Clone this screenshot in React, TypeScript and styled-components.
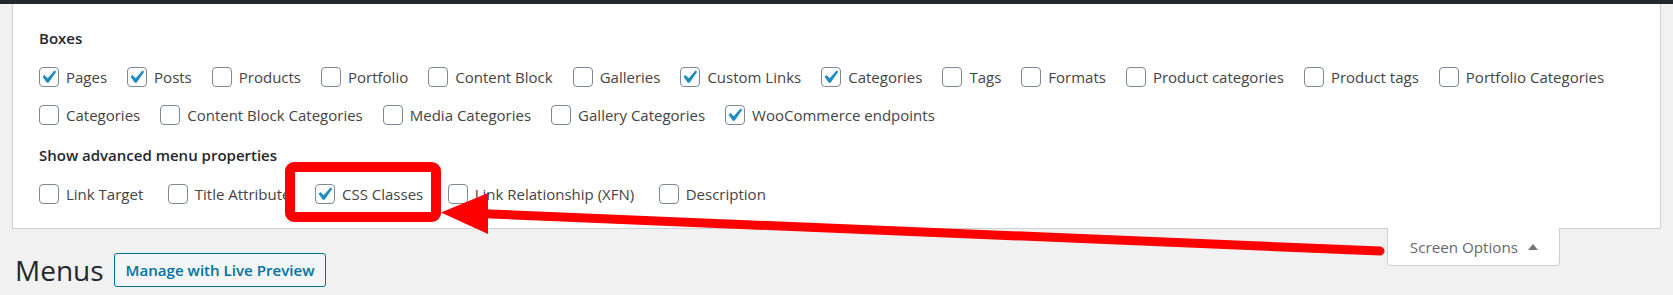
import * as React from 'react';
import styled, { createGlobalStyle } from 'styled-components';

const fontStack = `"Open Sans", "Noto Sans", "DejaVu Sans", sans-serif`;

const GlobalStyle = createGlobalStyle`
  html, body {
    margin: 0;
    padding: 0;
    background: #f1f1f1;
  }
  body {
    font-family: ${fontStack};
    color: #444;
    -webkit-font-smoothing: antialiased;
  }
  * {
    box-sizing: border-box;
  }
`;

interface BoxOption {
  label: string;
  checked?: boolean;
}

const boxes: BoxOption[] = [
  { label: 'Pages', checked: true },
  { label: 'Posts', checked: true },
  { label: 'Products' },
  { label: 'Portfolio' },
  { label: 'Content Block' },
  { label: 'Galleries' },
  { label: 'Custom Links', checked: true },
  { label: 'Categories', checked: true },
  { label: 'Tags' },
  { label: 'Formats' },
  { label: 'Product categories' },
  { label: 'Product tags' },
  { label: 'Portfolio Categories' },
  { label: 'Categories' },
  { label: 'Content Block Categories' },
  { label: 'Media Categories' },
  { label: 'Gallery Categories' },
  { label: 'WooCommerce endpoints', checked: true },
];

const advanced: BoxOption[] = [
  { label: 'Link Target' },
  { label: 'Title Attribute' },
  { label: 'CSS Classes', checked: true },
  { label: 'Link Relationship (XFN)' },
  { label: 'Description' },
];

const Page = styled.div`
  position: relative;
  min-height: 295px;
`;

const AdminBarEdge = styled.div`
  height: 4px;
  background: #23282d;
`;

const ScreenMeta = styled.div`
  margin: 0 12px;
  padding: 23px 10px 23px 26px;
  background: #fff;
  border: 1px solid #ccd0d4;
  border-top: 0;
`;

const Group = styled.div`
  & + & {
    margin-top: 18px;
  }
`;

const GroupTitle = styled.div`
  font-size: 15px;
  line-height: 22px;
  font-weight: 600;
  color: #23282d;
  margin-bottom: 17px;
`;

const CheckList = styled.div<{ $gap: number }>`
  display: flex;
  flex-wrap: wrap;
  column-gap: ${p => p.$gap}px;
  row-gap: 15.5px;
`;

const Option = styled.label`
  display: inline-flex;
  align-items: center;
  gap: 7px;
  font-size: 15px;
  line-height: 22px;
  color: #444;
  white-space: nowrap;
`;

const Box = styled.span`
  position: relative;
  flex: none;
  width: 20px;
  height: 20px;
  border: 1px solid #7e8993;
  border-radius: 4px;
  background: #fff;
`;

const Tick = styled.svg`
  position: absolute;
  left: -5px;
  top: -3.75px;
  width: 26.25px;
  height: 26.25px;
`;

const MetaLinks = styled.div`
  float: right;
  margin-right: 113px;
  position: relative;
`;

const ScreenOptionsTab = styled.div`
  display: flex;
  align-items: center;
  gap: 10px;
  height: 38px;
  margin-top: -1px;
  padding: 2px 21px 0 22px;
  background: #fff;
  border: 1px solid #ccd0d4;
  border-top: 0;
  border-radius: 0 0 4px 4px;
  font-size: 15.2px;
  color: #646970;
`;

const Wrap = styled.div`
  display: flex;
  align-items: center;
  gap: 10px;
  padding: 24px 0 0 15px;
`;

const Heading = styled.h1`
  margin: 0;
  font-size: 28px;
  font-weight: 400;
  line-height: 34px;
  color: #23282d;
`;

const ActionButton = styled.a`
  display: inline-flex;
  align-items: center;
  height: 34px;
  padding: 0 11px;
  border: 1px solid #0071a1;
  border-radius: 3px;
  background: #f3f5f6;
  color: #0071a1;
  font-size: 15.1px;
  font-weight: 600;
  text-decoration: none;
`;

const Annotation = styled.svg`
  position: absolute;
  top: 0;
  left: 0;
  width: 1673px;
  height: 295px;
  pointer-events: none;
`;

const Checkbox: React.FC<{ checked?: boolean }> = ({ checked }) => (
  <Box>
    {checked && (
      <Tick viewBox="0 0 20 20">
        <path d="M14.83 4.89l1.34.94-5.81 8.38H9.02L5.78 9.67l1.34-1.25 2.57 2.4z" fill="#1e8cbe" />
      </Tick>
    )}
  </Box>
);

const OptionList: React.FC<{ items: BoxOption[]; gap: number }> = ({ items, gap }) => (
  <CheckList $gap={gap}>
    {items.map((item, i) => (
      <Option key={i}>
        <Checkbox checked={item.checked} />
        {item.label}
      </Option>
    ))}
  </CheckList>
);

export default function App() {
  return (
    <Page>
      <GlobalStyle />
      <AdminBarEdge />
      <ScreenMeta>
        <Group>
          <GroupTitle>Boxes</GroupTitle>
          <OptionList items={boxes} gap={20} />
        </Group>
        <Group>
          <GroupTitle>Show advanced menu properties</GroupTitle>
          <OptionList items={advanced} gap={24.5} />
        </Group>
      </ScreenMeta>
      <MetaLinks>
        <ScreenOptionsTab>
          Screen Options
          <svg width="10" height="6" viewBox="0 0 10 6">
            <polygon points="5,0 10,6 0,6" fill="#72777c" />
          </svg>
        </ScreenOptionsTab>
      </MetaLinks>
      <Wrap>
        <Heading>Menus</Heading>
        <ActionButton href="#">Manage with Live Preview</ActionButton>
      </Wrap>
      <Annotation viewBox="0 0 1673 295">
        <rect x="290" y="167" width="146" height="50" rx="4" fill="none" stroke="#ff0000" strokeWidth="10" />
        <line x1="478" y1="213.5" x2="1380" y2="251" stroke="#ff0000" strokeWidth="9" strokeLinecap="round" />
        <polygon points="441,212.5 488,193 488,234" fill="#ff0000" />
      </Annotation>
    </Page>
  );
}
